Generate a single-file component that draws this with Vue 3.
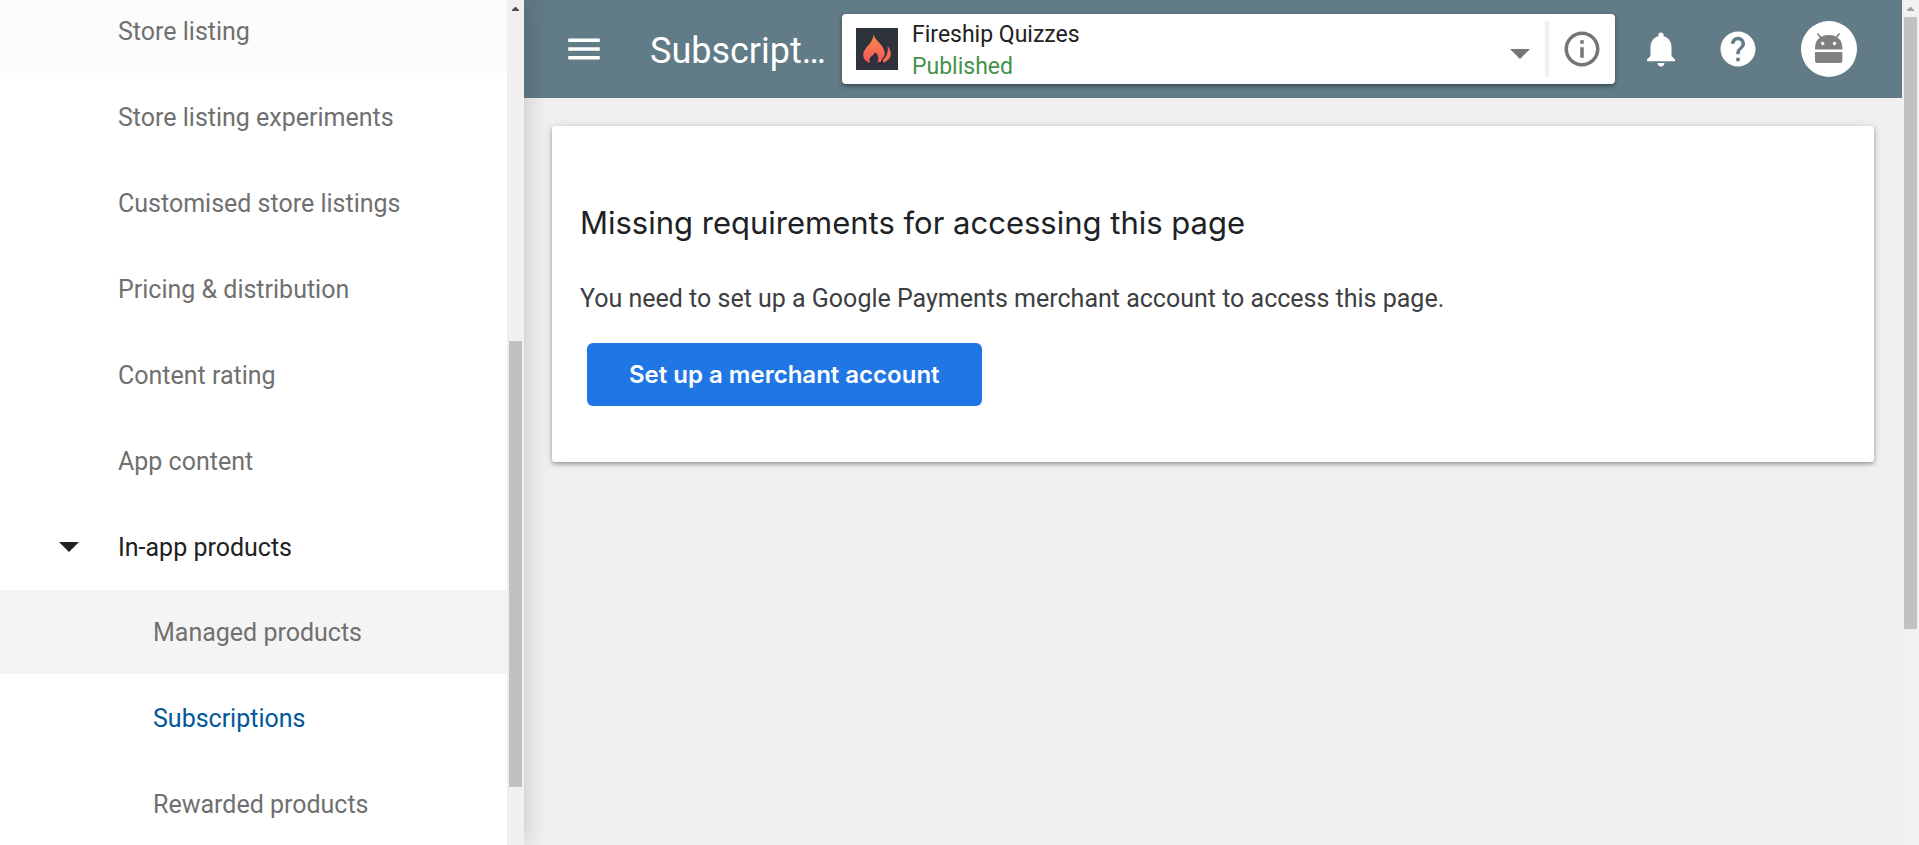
<script setup>
const items = [
  { label: 'Store listing', tint: true },
  { label: 'Store listing experiments' },
  { label: 'Customised store listings' },
  { label: 'Pricing & distribution' },
  { label: 'Content rating' },
  { label: 'App content' },
]
const products = [
  { label: 'Managed products', hover: true },
  { label: 'Subscriptions', active: true },
  { label: 'Rewarded products' },
]
</script>

<template>
  <div class="shell">
    <aside class="sidebar">
      <nav class="nav" aria-label="App sections">
        <ul class="list">
          <li v-for="item in items" :key="item.label">
            <a href="#" class="row" :class="{ tint: item.tint }">{{ item.label }}</a>
          </li>
          <li>
            <button type="button" class="row group" aria-expanded="true">
              <svg class="caret" viewBox="0 0 20 10" aria-hidden="true"><path d="M0 0h20L10 10z" fill="currentColor" /></svg>
              <span>In-app products</span>
            </button>
            <ul class="sublist">
              <li v-for="item in products" :key="item.label">
                <a
                  href="#"
                  class="row sub"
                  :class="{ hover: item.hover, active: item.active }"
                  :aria-current="item.active ? 'page' : null"
                >{{ item.label }}</a>
              </li>
            </ul>
          </li>
        </ul>
      </nav>
      <div class="scrollbar" aria-hidden="true">
        <svg class="scroll-arrow" viewBox="0 0 17 17"><path d="M5 11h7v-1l-3-3h-1l-3 3z" fill="#505050" /></svg>
        <div class="nav-before"></div>
        <div class="thumb nav-thumb"></div>
        <div class="nav-after"></div>
      </div>
    </aside>

    <div class="content">
      <header class="appbar">
        <button type="button" class="icon-button" aria-label="Menu">
          <svg class="icon" viewBox="0 0 24 24"><path d="M3 18h18v-2H3v2zm0-5h18v-2H3v2zm0-7v2h18V6H3z" fill="#fff" /></svg>
        </button>
        <h1 class="title">Subscriptions</h1>
        <div class="picker">
          <button type="button" class="app-select" aria-label="Select app">
            <svg class="app-logo" viewBox="0 0 42 42" aria-hidden="true">
              <defs>
                <linearGradient id="flame" x1="0" y1="0" x2="0" y2="1">
                  <stop offset="0" stop-color="#fb8a45" />
                  <stop offset="1" stop-color="#f4575f" />
                </linearGradient>
              </defs>
              <rect width="42" height="42" fill="#2e323a" />
              <path d="M17.500 7C18 13 29 17 29.300 26C29.500 29 28 30.500 26.500 32C27 34 26.800 35 26.300 36C24.500 35 22 34.500 21.200 34.500C24 31 23 27 18.500 24C18.500 27.500 14 28 13.500 31.500C13.300 33 14 34.500 14.600 35C10 34 7 30.500 7.200 26.500C7.500 19.500 17 16 17.500 7Z" fill="#16191e" opacity=".4" transform="translate(1 1)" />
              <path d="M17.500 6.500C19 13 28.500 17 28.800 25C29 28.500 26 30.500 24.500 34.500C23 33.500 22 34 21.200 35C23.500 30.500 22.500 27 18.800 24C18.500 27.500 14 28 13.500 31.500C13.300 33 14 34.500 14.600 35C10 34 7 30.500 7.200 26.500C7.500 19.500 17 16 17.500 6.500Z" fill="url(#flame)" />
              <path d="M31.500 18C37 24 36 31.500 27 35C27.500 33.500 27.200 32.800 26.500 32C29.500 29.500 33 25 31.500 18Z" fill="#f7685a" />
            </svg>
            <span class="app-text">
              <span class="app-name">Fireship Quizzes</span>
              <span class="app-status">Published</span>
            </span>
            <svg class="select-caret" viewBox="0 0 20 10" aria-hidden="true"><path d="M0 0h20L10 10z" fill="#757575" /></svg>
          </button>
          <span class="divider"></span>
          <button type="button" class="icon-button" aria-label="App information">
            <svg class="icon" viewBox="0 0 24 24"><path d="M11 17h2v-6h-2v6zm1-15C6.480 2 2 6.480 2 12s4.480 10 10 10 10-4.480 10-10S17.520 2 12 2zm0 18c-4.410 0-8-3.590-8-8s3.590-8 8-8 8 3.590 8 8-3.590 8-8 8zM11 9h2V7h-2v2z" fill="#757575" /></svg>
          </button>
        </div>
        <div class="actions">
          <button type="button" class="icon-button" aria-label="Notifications">
            <svg class="icon" viewBox="0 0 24 24"><path d="M12 22c1.100 0 2-.9 2-2h-4c0 1.300.9 2 2 2zm6-6v-5c0-3.070-1.630-5.640-4.500-6.320V4c0-.83-.67-1.500-1.500-1.500s-1.500.67-1.500 1.500v.68C7.640 5.360 6 7.920 6 11v5l-2 2v1h16v-1l-2-2z" fill="#fff" /></svg>
          </button>
          <button type="button" class="icon-button" aria-label="Help">
            <svg class="icon" viewBox="0 0 24 24"><path d="M12 2C6.480 2 2 6.480 2 12s4.480 10 10 10 10-4.480 10-10S17.520 2 12 2zm1 17h-2v-2h2v2zm2.070-7.750l-.9.920C13.450 12.900 13 13.500 13 15h-2v-.5c0-1.100.45-2.100 1.170-2.830l1.240-1.260c.37-.36.59-.86.59-1.410 0-1.100-.9-2-2-2s-2 .9-2 2H8c0-2.210 1.790-4 4-4s4 1.790 4 4c0 .88-.36 1.680-.93 2.250z" fill="#fff" /></svg>
          </button>
        </div>
        <button type="button" class="avatar" aria-label="Account">
          <svg class="android" viewBox="0 0 56 56">
            <circle cx="28" cy="28" r="28" fill="#fff" />
            <path d="M16.500 12.500l4 5M38.500 12.500l-4 5" stroke="#808080" stroke-width="1.600" fill="none" />
            <path d="M14 28.500v-1C14 18.500 19.500 14 27.700 14S41.400 18.500 41.400 27.500v1z" fill="#808080" />
            <circle cx="21.700" cy="22.500" r="1.700" fill="#fff" />
            <circle cx="33.500" cy="22.500" r="1.700" fill="#fff" />
            <path d="M14 31h27.400v8.500q0 2.500-2.500 2.500H16.500q-2.500 0-2.500-2.500z" fill="#808080" />
          </svg>
        </button>
      </header>

      <main class="main">
        <section class="card">
          <h2 class="heading">Missing requirements for accessing this page</h2>
          <p class="message">You need to set up a Google Payments merchant account to access this page.</p>
          <button type="button" class="primary">Set up a merchant account</button>
        </section>
      </main>
    </div>

    <div class="scrollbar page-scroll" aria-hidden="true">
      <svg class="scroll-arrow" viewBox="0 0 17 17"><path d="M5 11h7v-1l-3-3h-1l-3 3z" fill="#a0a0a0" /></svg>
      <div class="thumb page-thumb"></div>
      <div class="page-after"></div>
    </div>
  </div>
</template>

<style>
body {
  margin: 0;
  background: #f0f0f0;
}
</style>

<style scoped>
.shell {
  display: flex;
  height: 100vh;
  overflow: hidden;
  font-family: Roboto, "Liberation Sans", sans-serif;
  font-size: 25px;
  background: #f0f0f0;
}
button {
  border: 0;
  padding: 0;
  margin: 0;
  background: none;
  font: inherit;
  color: inherit;
  cursor: pointer;
}
.sidebar {
  position: relative;
  z-index: 1;
  flex: 0 0 524px;
  display: flex;
  background: #fff;
  box-shadow: 0 0 24px rgba(0, 0, 0, 0.2);
}
.nav {
  flex: 1;
  overflow: hidden;
}
.list,
.sublist {
  list-style: none;
  margin: 0;
  padding: 0;
  display: flex;
  flex-direction: column;
  gap: 2px;
}
.list {
  margin-top: -11px;
}
.sublist {
  margin-top: 1px;
}
.row {
  display: flex;
  align-items: center;
  box-sizing: border-box;
  width: 100%;
  height: 84px;
  padding-left: 118px;
  font-weight: 400;
  color: #707070;
  text-decoration: none;
}
.tint {
  background: #fcfcfc;
}
.group {
  padding-left: 59px;
  gap: 39px;
  color: #212121;
}
.caret {
  width: 20px;
  height: 10px;
}
.sub {
  padding-left: 153px;
}
.hover {
  background: #f4f4f4;
}
.active {
  color: #01579b;
}
.scrollbar {
  flex: 0 0 17px;
  display: flex;
  flex-direction: column;
  background: #f0f0f0;
}
.scroll-arrow {
  width: 17px;
  height: 17px;
}
.thumb {
  margin: 0 2px;
  background: #c1c1c1;
}
.nav-before {
  flex: 324;
}
.nav-thumb {
  flex: 446;
}
.nav-after {
  flex: 58;
}
.page-scroll {
  background: #f0f1f1;
}
.page-thumb {
  flex: 612;
}
.page-after {
  flex: 216;
}
.content {
  flex: 1;
  min-width: 0;
}
.appbar {
  display: flex;
  align-items: center;
  height: 98px;
  box-sizing: border-box;
  padding: 0 45px 0 39px;
  background: #617b87;
}
.icon-button {
  flex: none;
  width: 42px;
  height: 42px;
}
.icon {
  display: block;
  width: 42px;
  height: 42px;
}
.title {
  flex: 0 0 180px;
  margin: 0 12px 0 45px;
  padding-top: 4px;
  overflow: hidden;
  white-space: nowrap;
  text-overflow: ellipsis;
  font-size: 36px;
  line-height: 48px;
  font-weight: 400;
  color: #fff;
}
.picker {
  flex: 1;
  min-width: 0;
  height: 70px;
  display: flex;
  align-items: center;
  box-sizing: border-box;
  padding-right: 12px;
  background: #fff;
  border-radius: 4px;
  box-shadow: 0 2px 4px rgba(0, 0, 0, 0.4);
}
.app-select {
  flex: 1;
  min-width: 0;
  display: flex;
  align-items: center;
  padding: 0 15px 0 14px;
  text-align: left;
}
.app-logo {
  flex: none;
  width: 42px;
  height: 42px;
  margin-right: 14px;
}
.app-text {
  flex: 1;
  display: flex;
  flex-direction: column;
  padding-top: 4px;
  font-size: 23px;
  line-height: 32px;
}
.app-name {
  color: #212121;
}
.app-status {
  color: #43934a;
}
.select-caret {
  width: 20px;
  height: 10px;
  margin-top: 10px;
}
.divider {
  width: 4px;
  height: 56px;
  margin-right: 12px;
  background: #f0f0f0;
}
.actions {
  display: flex;
  gap: 35px;
  margin: 0 42px 0 25px;
}
.avatar {
  flex: none;
  width: 56px;
  height: 56px;
}
.android {
  display: block;
  width: 56px;
  height: 56px;
}
.main {
  padding: 28px;
}
.card {
  padding: 76px 28px 56px;
  background: #fff;
  border-radius: 3px;
  box-shadow: 0 2px 4px rgba(0, 0, 0, 0.35), 0 0 12px rgba(0, 0, 0, 0.08);
}
.heading {
  margin: 0;
  font-family: Inter, sans-serif;
  font-size: 31px;
  line-height: 42px;
  font-weight: 400;
  color: #202124;
}
.message {
  margin: 37px 0 26px;
  line-height: 36px;
  color: #3c4043;
}
.primary {
  display: block;
  height: 63px;
  margin-left: 7px;
  padding: 0 42px;
  border-radius: 6px;
  background: #2176e5;
  color: #fff;
  font-family: Inter, sans-serif;
  font-size: 24px;
  font-weight: 600;
}
</style>
